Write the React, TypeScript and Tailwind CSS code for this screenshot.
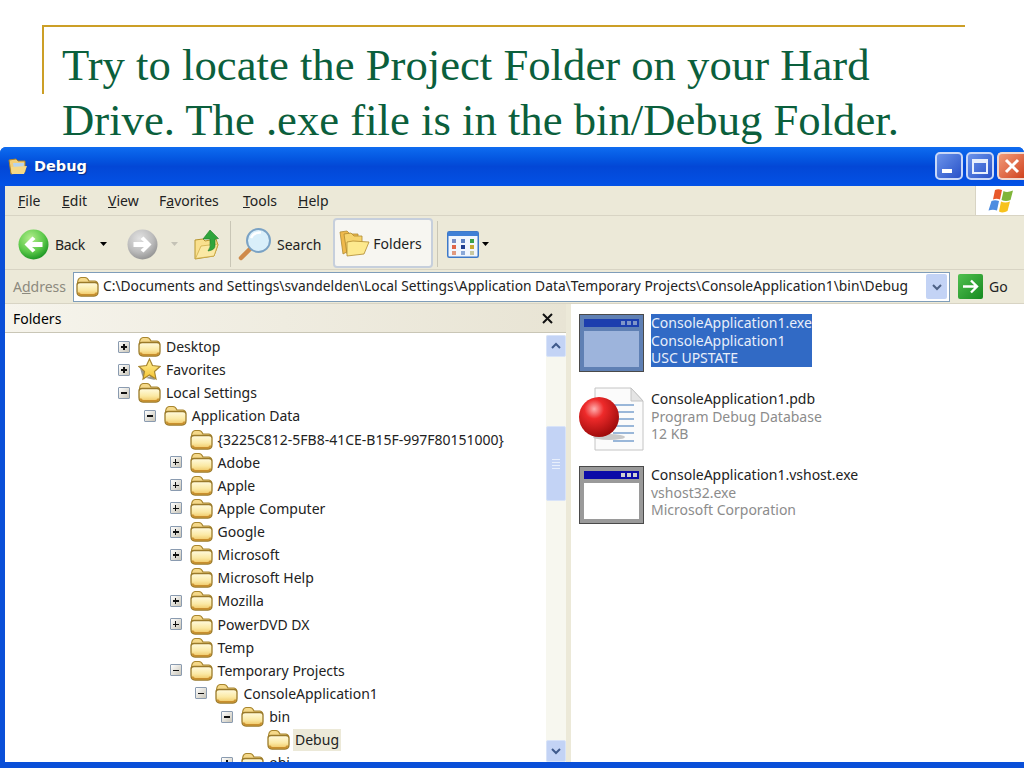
import React from 'react';

const uiFont = "font-['Noto_Sans',sans-serif]";

// yellow XP folder
const FolderIcon = ({ id = 'tree' }: { id?: string }) => (
    <svg width="23" height="21" viewBox="0 0 23 21" className="shrink-0">
        <defs>
            <linearGradient id={`folderBody-${id}`} x1="0" y1="0" x2="0" y2="1">
                <stop offset="0" stopColor="#fffbe0" />
                <stop offset="0.55" stopColor="#fbe9a4" />
                <stop offset="1" stopColor="#eec25a" />
            </linearGradient>
        </defs>
        <path d="M1.5 8 Q1.5 2 5 1.5 L9 1.5 Q11.5 1.5 13 5 L19 5 Q21.5 5.5 21.5 8 Z" fill="#f5d98a" stroke="#a8862f" strokeWidth="1.2" />
        <path d="M1 9 Q1 6.5 4 6.5 L19 6.5 Q22 6.5 22 9 L22 15.5 Q22 20 18 20 L5 20 Q1 20 1 15.5 Z" fill={`url(#folderBody-${id})`} stroke="#9a7a2a" strokeWidth="1.3" />
        <path d="M2.5 16.5 Q3 18.8 5.5 18.8 L17.5 18.8 Q20 18.8 20.5 16.5" fill="none" stroke="#c98f2e" strokeWidth="1.4" />
    </svg>
);

const StarIcon = () => (
    <svg width="23" height="23" viewBox="0 0 23 23" className="shrink-0">
        <defs>
            <linearGradient id="starFill" x1="0" y1="0" x2="0" y2="1">
                <stop offset="0" stopColor="#fff2a0" />
                <stop offset="1" stopColor="#f6c32c" />
            </linearGradient>
        </defs>
        <path d="M6 22 L8 15 L2 10 L4 17 Z" fill="#9a9a90" />
        <path d="M17 22 L15 17 L8 20 Z" fill="#9a9a90" />
        <path d="M11.5 1 L14.5 7.5 L22 8.5 L16.5 13.5 L18 21 L11.5 17 L5 21 L6.5 13.5 L1 8.5 L8.5 7.5 Z" fill="url(#starFill)" stroke="#a8862f" strokeWidth="1.2" />
    </svg>
);

const Expander = ({ kind }: { kind: 'plus' | 'minus' }) => (
    <div className="relative w-[12px] h-[12px] border border-[#8a9bb0] rounded-[1px] bg-gradient-to-br from-white to-[#c9c5b8] shrink-0">
        <div className="absolute left-[2px] top-[4.5px] w-[6px] h-[1.5px] bg-[#111]" />
        {kind === 'plus' && <div className="absolute left-[4.25px] top-[2px] w-[1.5px] h-[6px] bg-[#111]" />}
    </div>
);

type TreeRow = { name: string; level: number; exp?: 'plus' | 'minus'; star?: boolean; selected?: boolean };

const treeRows: TreeRow[] = [
    { name: 'Desktop', level: 0, exp: 'plus' },
    { name: 'Favorites', level: 0, exp: 'plus', star: true },
    { name: 'Local Settings', level: 0, exp: 'minus' },
    { name: 'Application Data', level: 1, exp: 'minus' },
    { name: '{3225C812-5FB8-41CE-B15F-997F80151000}', level: 2 },
    { name: 'Adobe', level: 2, exp: 'plus' },
    { name: 'Apple', level: 2, exp: 'plus' },
    { name: 'Apple Computer', level: 2, exp: 'plus' },
    { name: 'Google', level: 2, exp: 'plus' },
    { name: 'Microsoft', level: 2, exp: 'plus' },
    { name: 'Microsoft Help', level: 2 },
    { name: 'Mozilla', level: 2, exp: 'plus' },
    { name: 'PowerDVD DX', level: 2, exp: 'plus' },
    { name: 'Temp', level: 2 },
    { name: 'Temporary Projects', level: 2, exp: 'minus' },
    { name: 'ConsoleApplication1', level: 3, exp: 'minus' },
    { name: 'bin', level: 4, exp: 'minus' },
    { name: 'Debug', level: 5, selected: true },
    { name: 'obj', level: 4, exp: 'plus' },
];

const ArrowCircle = ({ dir, gray }: { dir: 'left' | 'right'; gray?: boolean }) => (
    <svg width="31" height="31" viewBox="0 0 31 31" className="shrink-0">
        <defs>
            <radialGradient id={gray ? 'grayBall' : 'greenBall'} cx="40%" cy="30%" r="75%">
                <stop offset="0" stopColor={gray ? '#e2e2e2' : '#b4ee8c'} />
                <stop offset="0.6" stopColor={gray ? '#bcbcbc' : '#5cc94a'} />
                <stop offset="1" stopColor={gray ? '#8f8f8f' : '#14901f'} />
            </radialGradient>
        </defs>
        <circle cx="15.5" cy="15.5" r="15" fill={`url(#${gray ? 'grayBall' : 'greenBall'})`} />
        <g transform={dir === 'right' ? 'rotate(180 15.5 15.5)' : undefined}>
            <path d="M6.5 15.5 L14.5 7.5 L17.5 10 L14 13 L24.5 13 L24.5 18 L14 18 L17.5 21 L14.5 23.5 Z" fill="#fff" />
        </g>
    </svg>
);

const UpIcon = () => (
    <svg width="27" height="31" viewBox="0 0 27 31" className="shrink-0">
        <path d="M2 11 L10 10 L12 12 L23 10 L25 16 L21 27 L2 30 Z" fill="#f9e08e" stroke="#b8962f" />
        <path d="M2.5 29.5 L8 17 L25 15 L21 27 Z" fill="#fbe9a4" stroke="#c8a53f" strokeWidth="0.7" />
        <path d="M17 1 L25.5 9.5 L22 10 L22 17 Q22 21 15 22 Q18 18 17 14 L17 10 L10 10 Z" fill="#2fa53b" stroke="#1d7d2a" strokeWidth="0.6" />
    </svg>
);

const SearchIcon = () => (
    <svg width="34" height="33" viewBox="0 0 34 33" className="shrink-0">
        <path d="M3 30 L13 20" stroke="#cf8a4a" strokeWidth="4.5" strokeLinecap="round" />
        <circle cx="20.5" cy="12.5" r="11.5" fill="#d9effa" stroke="#7aa2c4" strokeWidth="2" />
        <path d="M13 10 Q16 4 23 4.5" stroke="#fff" strokeWidth="2.5" fill="none" />
    </svg>
);

const FoldersIcon = () => (
    <svg width="31" height="27" viewBox="0 0 31 27" className="shrink-0">
        <path d="M1 2 L8 1 L11 4 L19 4 L19 16 L4 24 Z" fill="#efb94c" stroke="#b08a30" strokeWidth="0.8" />
        <path d="M5 4 L12 3 L15 6 L23 6 L23 14 L8 24 Z" fill="#f6d46e" stroke="#b08a30" strokeWidth="0.8" />
        <path d="M8 12 L14 11 L30 12 L25 24 L8 26 Z" fill="#fde98e" stroke="#b08a30" strokeWidth="0.8" />
    </svg>
);

const ViewsIcon = () => (
    <svg width="32" height="27" viewBox="0 0 32 27" className="shrink-0">
        <rect x="0.75" y="0.75" width="30.5" height="25.5" rx="1.5" fill="#f1f6fd" stroke="#3e79c8" strokeWidth="1.5" />
        <rect x="1" y="1" width="30" height="4" fill="#3f80d6" />
        {[
            [5, 8, '#7a8fc4'], [14, 8, '#5a7fc0'], [23, 8, '#3aa04a'],
            [5, 14, '#e0664a'], [14, 14, '#1f3f8f'], [23, 14, '#c8a82f'],
            [5, 20, '#e09a80'], [14, 20, '#8aa8d8'], [23, 20, '#c8c8a0'],
        ].map(([x, y, c]) => (
            <rect key={`${x}-${y}`} x={x as number} y={y as number} width="4" height="4" fill={c as string} />
        ))}
    </svg>
);

const DownCaret = ({ faint }: { faint?: boolean }) => (
    <svg width="7" height="4" viewBox="0 0 7 4" className="shrink-0">
        <path d="M0 0 L7 0 L3.5 4 Z" fill={faint ? '#c4c2b6' : '#000'} />
    </svg>
);

const Chevron = ({ up, color = '#3f5a8c' }: { up?: boolean; color?: string }) => (
    <svg width="10" height="8" viewBox="0 0 10 8">
        <path d={up ? 'M1 6 L5 2 L9 6' : 'M1 2 L5 6 L9 2'} fill="none" stroke={color} strokeWidth="2" />
    </svg>
);

const WindowsFlag = () => (
    <svg width="27" height="26" viewBox="0 0 27 26">
        <path d="M8 2 Q11 0.5 15 2 L13 11.5 Q9.5 10 6 11.5 Z" fill="#e8582a" />
        <path d="M16.5 3 Q20 5 26 2.5 L23.5 12 Q19 14 14.5 12 Z" fill="#7fb53a" />
        <path d="M4.5 13 Q8 11.5 12 13 L10 22.5 Q6 21 1.5 22.5 Z" fill="#4d8ce0" />
        <path d="M14 13.5 Q18 15.5 23 13.5 L20.5 23 Q16 25.5 12 23.5 Z" fill="#f7c21e" />
    </svg>
);

const ExeIcon = ({ dim }: { dim?: boolean }) => (
    <div className={`w-[65px] h-[58px] shrink-0 flex flex-col p-[4px] border border-[#4a4a4a] ${dim ? 'bg-[#9a9a9a]' : 'bg-[#5f80b4]'}`}>
        <div className={`h-[8px] flex justify-end items-center gap-[2px] pr-[2px] ${dim ? 'bg-[#0a0aa8]' : 'bg-[#1c3eae]'}`}>
            <span className={`w-[4px] h-[4px] ${dim ? 'bg-[#d0d0d0]' : 'bg-[#7f95c8]'}`} />
            <span className={`w-[4px] h-[4px] ${dim ? 'bg-[#d0d0d0]' : 'bg-[#7f95c8]'}`} />
            <span className={`w-[4px] h-[4px] ${dim ? 'bg-[#d0d0d0]' : 'bg-[#7f95c8]'}`} />
        </div>
        <div className={`flex-1 mt-[4px] ${dim ? 'bg-white' : 'bg-[#9db4dc]'}`} />
    </div>
);

const PdbIcon = () => (
    <svg width="66" height="66" viewBox="0 0 66 66" className="shrink-0 -mt-[3px]">
        <defs>
            <radialGradient id="redBall" cx="38%" cy="30%" r="70%">
                <stop offset="0" stopColor="#ffb0b0" />
                <stop offset="0.35" stopColor="#ee2a2a" />
                <stop offset="1" stopColor="#a00c0c" />
            </radialGradient>
        </defs>
        <path d="M16 1 L52 1 L64 14 L64 63 L16 63 Z" fill="#fbfbfb" stroke="#c4c4c4" />
        <path d="M52 1 L52 14 L64 14 Z" fill="#e4e4e4" stroke="#c4c4c4" />
        {[14, 21, 28, 35, 42, 50].map(y => (
            <path key={y} d={`M34 ${y + 4} L55 ${y + 4}`} stroke="#5b8ac4" strokeWidth="1.2" />
        ))}
        <ellipse cx="30" cy="50" rx="16" ry="3" fill="#c9c9c9" />
        <circle cx="20" cy="30" r="20" fill="url(#redBall)" />
    </svg>
);

const FileEntry = ({ icon, lines, selected }: { icon: React.ReactNode; lines: string[]; selected?: boolean }) => (
    <div className="flex items-start h-[76px]">
        <div className="w-[72px] shrink-0">{icon}</div>
        <div className={`text-[14px] leading-[17.5px] ${selected ? 'bg-[#316ac5] text-[#e8eefa]' : ''}`}>
            {lines.map((line, i) => (
                <div key={line} className={!selected && i > 0 ? 'text-[#8c8c8c]' : ''}>{line}</div>
            ))}
        </div>
    </div>
);

const App: React.FC = () => {
    return (
        <div className={`w-[1024px] h-[768px] overflow-hidden bg-white flex flex-col ${uiFont}`}>
            {/* Slide title */}
            <div className="h-[147px] shrink-0 pt-[25px] pl-[42px]">
                <div className="w-[923px] h-[69px] border-t-2 border-l-2 border-[#cc9f26] pl-[18px] pt-[11px]">
                    <h1 className="font-['Liberation_Serif',serif] text-[44.7px] leading-[55px] text-[#0b5f3c] whitespace-nowrap">
                        Try to locate the Project Folder on your Hard
                        <br />
                        Drive. The .exe file is in the bin/Debug Folder.
                    </h1>
                </div>
            </div>

            {/* Explorer window */}
            <div className="flex-1 min-h-0 flex flex-col bg-[#0a4fd8] rounded-t-[6px] pl-[5px] pb-[6px]">
                {/* Title bar */}
                <div className="h-[39px] shrink-0 -ml-[5px] pl-[8px] pr-0 flex items-center rounded-t-[6px] bg-gradient-to-b from-[#0f6cf0] via-[#0347d6] to-[#0352e6]">
                    <svg width="20" height="17" viewBox="0 0 20 17" className="shrink-0">
                        <path d="M1 2 L8 1 L10 3 L17 3 L17 14 L3 16 Z" fill="#f3cf78" stroke="#a5802e" />
                        <path d="M5 5 L16 5 L15 11 L6 11 Z" fill="#b6d3ef" />
                        <path d="M3 9 L19 8 L16 16 L4 16 Z" fill="#f6d987" />
                    </svg>
                    <span className="ml-[6px] font-['DejaVu_Sans',sans-serif] font-bold text-[14.5px] text-white [text-shadow:1px_1px_1px_#0a2a80]">Debug</span>
                    <div className="ml-auto flex items-center gap-[3px] pb-[1px]">
                        <div className="w-[28px] h-[28px] rounded-[5px] border-2 border-[#c9d8f8] bg-gradient-to-br from-[#6c93ea] to-[#2a51c8] flex items-end pl-[5px] pb-[5px]">
                            <div className="w-[10px] h-[4px] bg-white" />
                        </div>
                        <div className="w-[28px] h-[28px] rounded-[5px] border-2 border-[#c9d8f8] bg-gradient-to-br from-[#6c93ea] to-[#2a51c8] flex items-center justify-center">
                            <div className="w-[16px] h-[15px] border-2 border-[#e8effc] border-t-[4px]" />
                        </div>
                        <div className="w-[27px] h-[28px] rounded-l-[5px] border-2 border-r-0 border-[#f0d8d0] bg-gradient-to-br from-[#f09a78] to-[#d0401a] flex items-center justify-center">
                            <svg width="16" height="16" viewBox="0 0 16 16">
                                <path d="M2 2 L14 14 M14 2 L2 14" stroke="#fff" strokeWidth="3" />
                            </svg>
                        </div>
                    </div>
                </div>

                {/* Everything under the title bar */}
                <div className={`flex-1 min-h-0 flex flex-col bg-[#ece9d8] text-black text-[14px]`}>
                    {/* Menu bar */}
                    <div className="h-[30px] shrink-0 flex items-center border-b border-[#d8d4c4]">
                        <div className="flex items-center pl-[13px] text-[#222]">
                            <span className="w-[44px]"><u>F</u>ile</span>
                            <span className="w-[46px]"><u>E</u>dit</span>
                            <span className="w-[51px]"><u>V</u>iew</span>
                            <span className="w-[84px]">F<u>a</u>vorites</span>
                            <span className="w-[55px]"><u>T</u>ools</span>
                            <span><u>H</u>elp</span>
                        </div>
                        <div className="ml-auto w-[49px] h-full bg-white flex items-center justify-center border-l border-[#d8d4c4]">
                            <WindowsFlag />
                        </div>
                    </div>

                    {/* Toolbar */}
                    <div className="h-[54px] shrink-0 flex items-center border-b border-[#d8d4c4] pt-[3px]">
                        <div className="ml-[13px]"><ArrowCircle dir="left" /></div>
                        <span className="ml-[6px] text-[#222] w-[32px] tracking-[-0.3px]">Back</span>
                        <div className="ml-[13px]"><DownCaret /></div>
                        <div className="ml-[20px]"><ArrowCircle dir="right" gray /></div>
                        <div className="ml-[13px]"><DownCaret faint /></div>
                        <div className="ml-[15px]"><UpIcon /></div>
                        <div className="ml-[10px] w-[1px] h-[46px] bg-[#c9c6b6]" />
                        <div className="ml-[7px]"><SearchIcon /></div>
                        <span className="ml-[5px] text-[#222]">Search</span>
                        <div className="ml-[12px] w-[100px] h-[50px] bg-[#f7f6f1] border-2 border-[#c6cfdc] rounded-[4px] flex items-center pl-[4px] -mt-[2px]">
                            <FoldersIcon />
                            <span className="ml-[3px] text-[#222]">Folders</span>
                        </div>
                        <div className="ml-[4px] w-[1px] h-[46px] bg-[#c9c6b6]" />
                        <div className="ml-[9px]"><ViewsIcon /></div>
                        <div className="ml-[3px]"><DownCaret /></div>
                    </div>

                    {/* Address bar */}
                    <div className="h-[33px] shrink-0 flex items-center">
                        <span className="ml-[8px] w-[60px] text-[#8c8a7e]">A<u>d</u>dress</span>
                        <div className="w-[877px] h-[30px] flex items-center bg-white border border-[#7f9db9] pl-[2px] pr-[2px]">
                            <FolderIcon id="address" />
                            <span className="ml-[4px] text-[#222] whitespace-nowrap text-[13.8px]">C:\Documents and Settings\svandelden\Local Settings\Application Data\Temporary Projects\ConsoleApplication1\bin\Debug</span>
                            <div className="ml-auto w-[21px] h-[25px] rounded-[2px] bg-[#c3d3f5] flex items-center justify-center">
                                <Chevron color="#4d6185" />
                            </div>
                        </div>
                        <div className="ml-[8px] w-[25px] h-[25px] rounded-[2px] bg-gradient-to-br from-[#4fc04f] to-[#128a1f] flex items-center justify-center">
                            <svg width="17" height="15" viewBox="0 0 17 15">
                                <path d="M1 7.5 L15 7.5 M9 1.5 L15 7.5 L9 13.5" stroke="#fff" strokeWidth="2.4" fill="none" />
                            </svg>
                        </div>
                        <span className="ml-[6px] text-[#222]">Go</span>
                    </div>

                    {/* Panes */}
                    <div className="flex-1 min-h-0 flex border-t border-[#d8d4c4]">
                        {/* Folders pane */}
                        <div className="w-[561px] shrink-0 flex flex-col">
                            <div className="h-[29px] shrink-0 flex items-center justify-between pl-[8px] pr-[13px] bg-gradient-to-r from-[#f6f4ec] to-[#e8e4d4] border-b border-[#c9c6b6]">
                                <span>Folders</span>
                                <svg width="11" height="11" viewBox="0 0 11 11">
                                    <path d="M1 1 L10 10 M10 1 L1 10" stroke="#111" strokeWidth="2" />
                                </svg>
                            </div>
                            <div className="flex-1 min-h-0 flex bg-white">
                                <div className="flex-1 min-w-0 overflow-hidden pt-[2px]">
                                    {treeRows.map(row => (
                                        <div key={row.name} className="h-[23.13px] flex items-center" style={{ paddingLeft: 113 + row.level * 25.8 }}>
                                            <div className="w-[20px] shrink-0 flex">
                                                {row.exp && <Expander kind={row.exp} />}
                                            </div>
                                            {row.star ? <StarIcon /> : <FolderIcon />}
                                            <span className={`whitespace-nowrap text-[#222] ${row.selected ? 'ml-[3px] bg-[#ece9d8] px-[2px] leading-[22px]' : 'ml-[5px]'}`}>
                                                {row.name}
                                            </span>
                                        </div>
                                    ))}
                                </div>
                                {/* Scrollbar */}
                                <div className="w-[20px] shrink-0 bg-[#f7f7ef] flex flex-col mt-[2px]">
                                    <div className="h-[22px] shrink-0 rounded-[2px] bg-[#c3d3f5] border border-[#d8e3f8] flex items-center justify-center">
                                        <Chevron up />
                                    </div>
                                    <div className="mt-[69px] h-[75px] shrink-0 rounded-[2px] bg-[#c3d3f5] border border-[#d8e3f8] flex flex-col items-center justify-center gap-[2px]">
                                        <span className="w-[8px] h-[1px] bg-[#e8effc]" />
                                        <span className="w-[8px] h-[1px] bg-[#e8effc]" />
                                        <span className="w-[8px] h-[1px] bg-[#e8effc]" />
                                        <span className="w-[8px] h-[1px] bg-[#e8effc]" />
                                    </div>
                                    <div className="mt-auto h-[22px] shrink-0 rounded-[2px] bg-[#c3d3f5] border border-[#d8e3f8] flex items-center justify-center">
                                        <Chevron />
                                    </div>
                                </div>
                            </div>
                        </div>

                        {/* Splitter */}
                        <div className="w-[5px] shrink-0 bg-[#ece9d8]" />

                        {/* File list */}
                        <div className="flex-1 min-w-0 bg-white pl-[8px] pt-[10px] text-[#222]">
                            <FileEntry icon={<ExeIcon />} lines={['ConsoleApplication1.exe', 'ConsoleApplication1', 'USC UPSTATE']} selected />
                            <FileEntry icon={<PdbIcon />} lines={['ConsoleApplication1.pdb', 'Program Debug Database', '12 KB']} />
                            <FileEntry icon={<ExeIcon dim />} lines={['ConsoleApplication1.vshost.exe', 'vshost32.exe', 'Microsoft Corporation']} />
                        </div>
                    </div>
                </div>
            </div>
        </div>
    );
};

export default App;
